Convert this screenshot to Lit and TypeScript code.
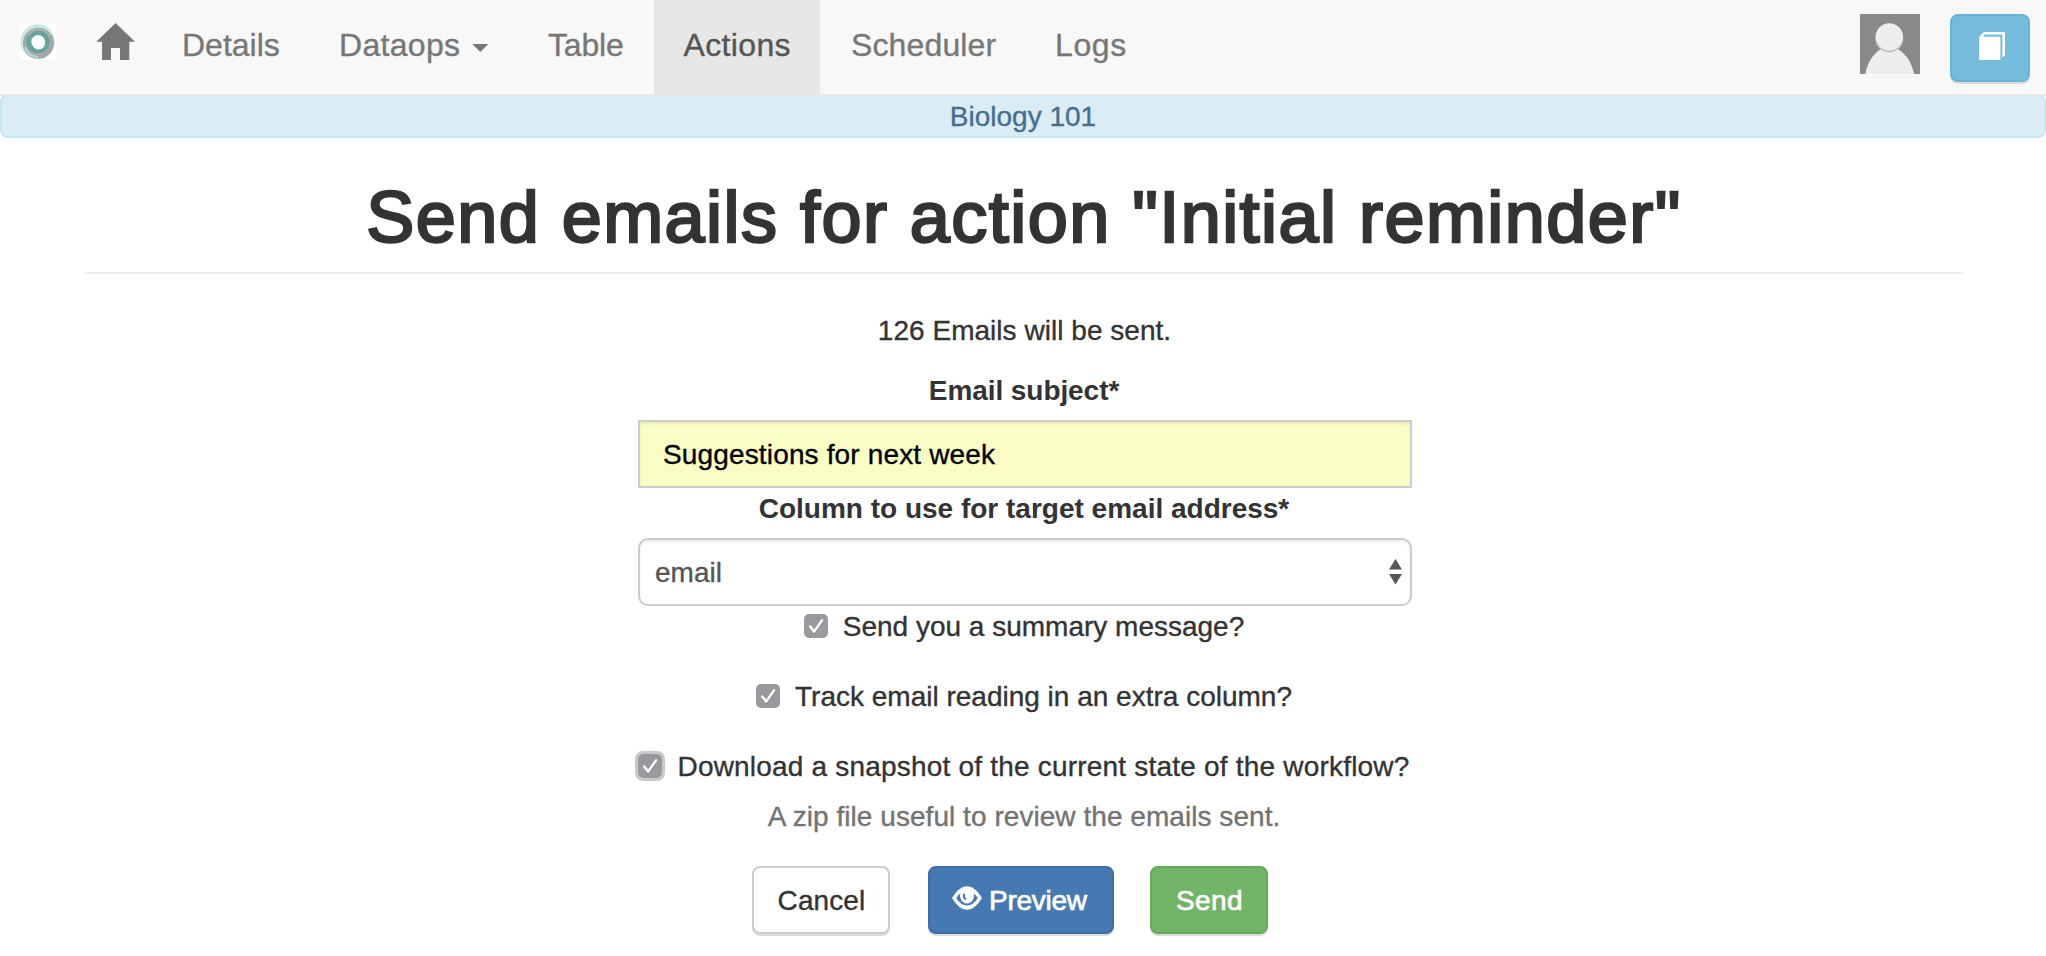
import { LitElement, html, css, svg } from "lit";
import { customElement, property } from "lit/decorators.js";
import { classMap } from "lit/directives/class-map.js";

@customElement("check-row")
class CheckRow extends LitElement {
  @property() label = "";
  @property({ type: Boolean }) focused = false;

  static styles = css`
    :host { display: flex; justify-content: center; align-items: center; height: 40px; }
    .box { width: 24px; height: 24px; border-radius: 5px; background: linear-gradient(#98979c, #9b9a9f); display: block; flex: none; }
    .box.focused { box-shadow: 0 0 0 3px #c9c9cb; }
    .box svg { display: block; }
    .label { line-height: 40px; margin-left: 15px; padding-top: 2px; white-space: nowrap; }
  `;

  render() {
    return html`
      <span class=${classMap({ box: true, focused: this.focused })}>
        <svg width="24" height="24" viewBox="0 0 24 24" fill="none" stroke-linecap="round" stroke-linejoin="round">
          <path d="M6.2 13.6 10.2 18.8 18 7.4" stroke="#85848a" stroke-width="2.4" />
          <path d="M6.2 12.6 10.2 17.6 18 6.4" stroke="#fff" stroke-width="2.5" />
        </svg>
      </span>
      <span class="label">${this.label}</span>
    `;
  }
}

const homeIcon = svg`<path fill="#777" d="M19.6 0 39 18.8H33.3V37H24V25H15V37H6V18.8H.3Z"/>`;

@customElement("app-root")
class AppRoot extends LitElement {
  static styles = css`
    :host { display: block; height: 956px; overflow: hidden; background: #fff; color: #333; font: 28px/40px "Liberation Sans", Arial, sans-serif; -webkit-text-stroke: 0.35px currentColor; }
    * { box-sizing: border-box; }
    svg { display: block; flex: none; }

    .nav { display: flex; height: 96px; background: #f8f8f8; border-bottom: 2px solid #e7e7e7; position: relative; z-index: 1; }
    .logo { margin: 24px 40px 0 20px; background: #fff; height: 36px; }
    .home { margin: 23px 17px 0 0; }
    .item { height: 94px; padding-left: 30px; font-size: 32px; line-height: 90px; color: #777; display: flex; }
    .item.active { background: #e7e7e7; color: #555; }
    .details { width: 157px; }
    .dataops { width: 209px; letter-spacing: 0.3px; }
    .table { width: 136px; letter-spacing: -0.2px; }
    .actions { width: 166px; letter-spacing: 0.35px; padding-left: 29.5px; }
    .scheduler { width: 205px; letter-spacing: 0.13px; padding-left: 31px; }
    .logs { letter-spacing: 0.6px; }
    .caret { width: 16px; height: 8px; margin: 44px 0 0 12px; background: #777; clip-path: polygon(0 0, 100% 0, 50% 100%); }
    .avatar { margin: 14px 30px 0 auto; }
    .book { width: 80px; height: 68px; margin: 14px 16px 0 0; padding: 16px 0 0 27px; background: #75bcdb; border: 2px solid #66b4d6; border-radius: 8px; box-shadow: 0 2px 0 #dcdcdc; }

    .workflow { height: 44px; margin-top: -2px; padding-top: 1px; border: 2px solid #c4e7f0; border-radius: 8px; background: #dcecf4; color: #43708e; text-align: center; }

    .main { padding: 40px 82px 0 84px; text-align: center; }
    .title { margin: 0; height: 96px; border-bottom: 2px solid #eee; font-size: 72px; line-height: 78px; font-weight: 400; letter-spacing: 1.46px; -webkit-text-stroke: 2.5px #333; white-space: nowrap; }
    .count, .form-label, .help { height: 40px; padding-top: 1px; }
    .count { margin-top: 36px; padding-left: 1px; letter-spacing: 0.03px; }
    .form-label { font-weight: 700; -webkit-text-stroke: 0; }
    .subject-label { margin-top: 20px; letter-spacing: -0.07px; }
    .control { display: flex; align-items: center; width: 774px; height: 68px; margin: 10px auto 0; border: 2px solid #ccc; box-shadow: inset 0 2px 3px rgba(0, 0, 0, 0.075); }
    .controls { padding-left: 2px; }
    .subject { font: inherit; letter-spacing: 0.15px; background: #fafdc4; color: #000; padding: 2px 22px 0 23px; border-radius: 0; outline: 0; }
    .select { border-radius: 10px; color: #555; padding: 0 8px 0 15px; justify-content: space-between; background-color: #fff; }
    .value { padding-top: 2px; }
    .track, .snapshot { margin-top: 30px; }
    .snapshot { letter-spacing: 0.2px; }
    .help { margin-top: 10px; color: #737373; letter-spacing: 0.05px; }
    .actions-row { display: flex; justify-content: center; margin: 30px 28px 0 0; }
    .btn { height: 68px; border: 2px solid; border-radius: 8px; display: flex; align-items: center; justify-content: center; box-shadow: 0 2px 0 #dcdcdc; }
    .btn .text { padding: 1px 0 0 1px; }
    .cancel { width: 138px; margin-right: 38px; border-color: #ccc; background: #fff; letter-spacing: 0.1px; }
    .cancel .text { color: #333; }
    .preview { width: 186px; margin-right: 36px; background: #4679b2; border-color: #3f6da5; justify-content: flex-start; padding-left: 22px; gap: 6px; letter-spacing: -0.28px; }
    .send { width: 118px; background: #72b568; border-color: #66aa59; letter-spacing: 0.4px; }
    .eye { margin-bottom: 4px; }
    .text { color: #fff; }
    .bright { -webkit-text-stroke: 0.7px #fff; }
  `;

  render() {
    return html`
      <nav class="nav">
        <svg class="logo" width="36" height="36" viewBox="0 0 36 36" fill="none">
          <defs>
            <filter id="soft" x="-20%" y="-20%" width="140%" height="140%"><feGaussianBlur stdDeviation=".7" /></filter>
          </defs>
          <g filter="url(#soft)">
            <circle cx="17.6" cy="17.6" r="15" stroke="#c9e8e1" stroke-width="4.5" />
            <circle cx="18.4" cy="19.2" r="12" stroke="#a3a8ac" stroke-width="7" />
            <circle cx="18" cy="17.6" r="9.2" stroke="#68a39f" stroke-width="5" />
            <path d="M8 12A12 12 0 0 1 29.5 12.5" stroke="#a9b3b4" stroke-width="2" />
            <path d="M5 23A14 14 0 0 0 18 33" stroke="#aeded5" stroke-width="2" />
            <circle cx="18.6" cy="18.8" r="6.6" fill="#fff" />
          </g>
        </svg>
        <svg class="home" width="39" height="37" viewBox="0 0 39 37">${homeIcon}</svg>
        <div class="item details">Details</div>
        <div class="item dataops">Dataops<span class="caret"></span></div>
        <div class="item table">Table</div>
        <div class="item actions active">Actions</div>
        <div class="item scheduler">Scheduler</div>
        <div class="item logs">Logs</div>
        <svg class="avatar" width="60" height="60" viewBox="0 0 60 60">
          <path fill="#898989" d="M0 0H60V60H0Z" />
          <path fill="#eeeeec" d="M5.3 60C8 45 18 33 29.5 33S51 45 54 60Z" />
          <ellipse cx="29.3" cy="24.2" rx="14" ry="14.3" fill="#c4c4c2" />
          <circle cx="29.3" cy="22.8" r="13.6" fill="#eeeeec" />
        </svg>
        <div class="book">
          <svg width="26" height="28" viewBox="0 0 26 28">
            <path fill="#fff" d="M0 5.2 4.8 0H25Q26 0 26 1V22.5Q26 24 23.4 25.4V3.6Q23.4 2.5 22.4 2.5H5.6L3.8 4.7H20.4Q21.4 4.7 21.4 5.7V28H1Q0 28 0 27Z" />
          </svg>
        </div>
      </nav>
      <div class="workflow">Biology 101</div>
      <main class="main">
        <h1 class="title">Send emails for action "Initial reminder"</h1>
        <div class="count">126 Emails will be sent.</div>
        <div class="form-label subject-label">Email subject*</div>
        <div class="controls"><input class="control subject" type="text" value="Suggestions for next week" /></div>
        <div class="form-label">Column to use for target email address*</div>
        <div class="controls">
          <div class="control select">
            <span class="value">email</span>
            <svg width="13" height="26" viewBox="0 0 13 26" fill="#555">
              <path d="M6.5 0 13 10.5H0Z" />
              <path d="M0 15H13L6.5 25.5Z" />
            </svg>
          </div>
        </div>
        <check-row label="Send you a summary message?"></check-row>
        <check-row class="track" label="Track email reading in an extra column?"></check-row>
        <check-row class="snapshot" focused label="Download a snapshot of the current state of the workflow?"></check-row>
        <div class="help">A zip file useful to review the emails sent.</div>
        <div class="actions-row">
          <div class="btn cancel"><span class="text">Cancel</span></div>
          <div class="btn preview">
            <svg class="eye" width="30" height="24" viewBox="0 0 30 24">
              <path fill="#fff" d="M0 12C5 4 10 .2 15 .2S25 4 30 12C25 20 20 23.8 15 23.8S5 20 0 12Z" />
              <path fill="#4679b2" d="M4.2 12Q5.8 9 8.4 7.4Q7.4 10 8.6 12.8Q10.4 17.6 15 17.6T21.4 12.8Q22.6 10 21.6 7.4Q24.2 9 25.8 12Q21 19.6 15 19.6T4.2 12Z" />
              <path fill="none" stroke="#4679b2" stroke-width="2" stroke-linecap="round" d="M12 8.6Q11.4 11.6 13.4 12.8" />
            </svg>
            <span class="text bright">Preview</span>
          </div>
          <div class="btn send"><span class="text bright">Send</span></div>
        </div>
      </main>
    `;
  }
}
